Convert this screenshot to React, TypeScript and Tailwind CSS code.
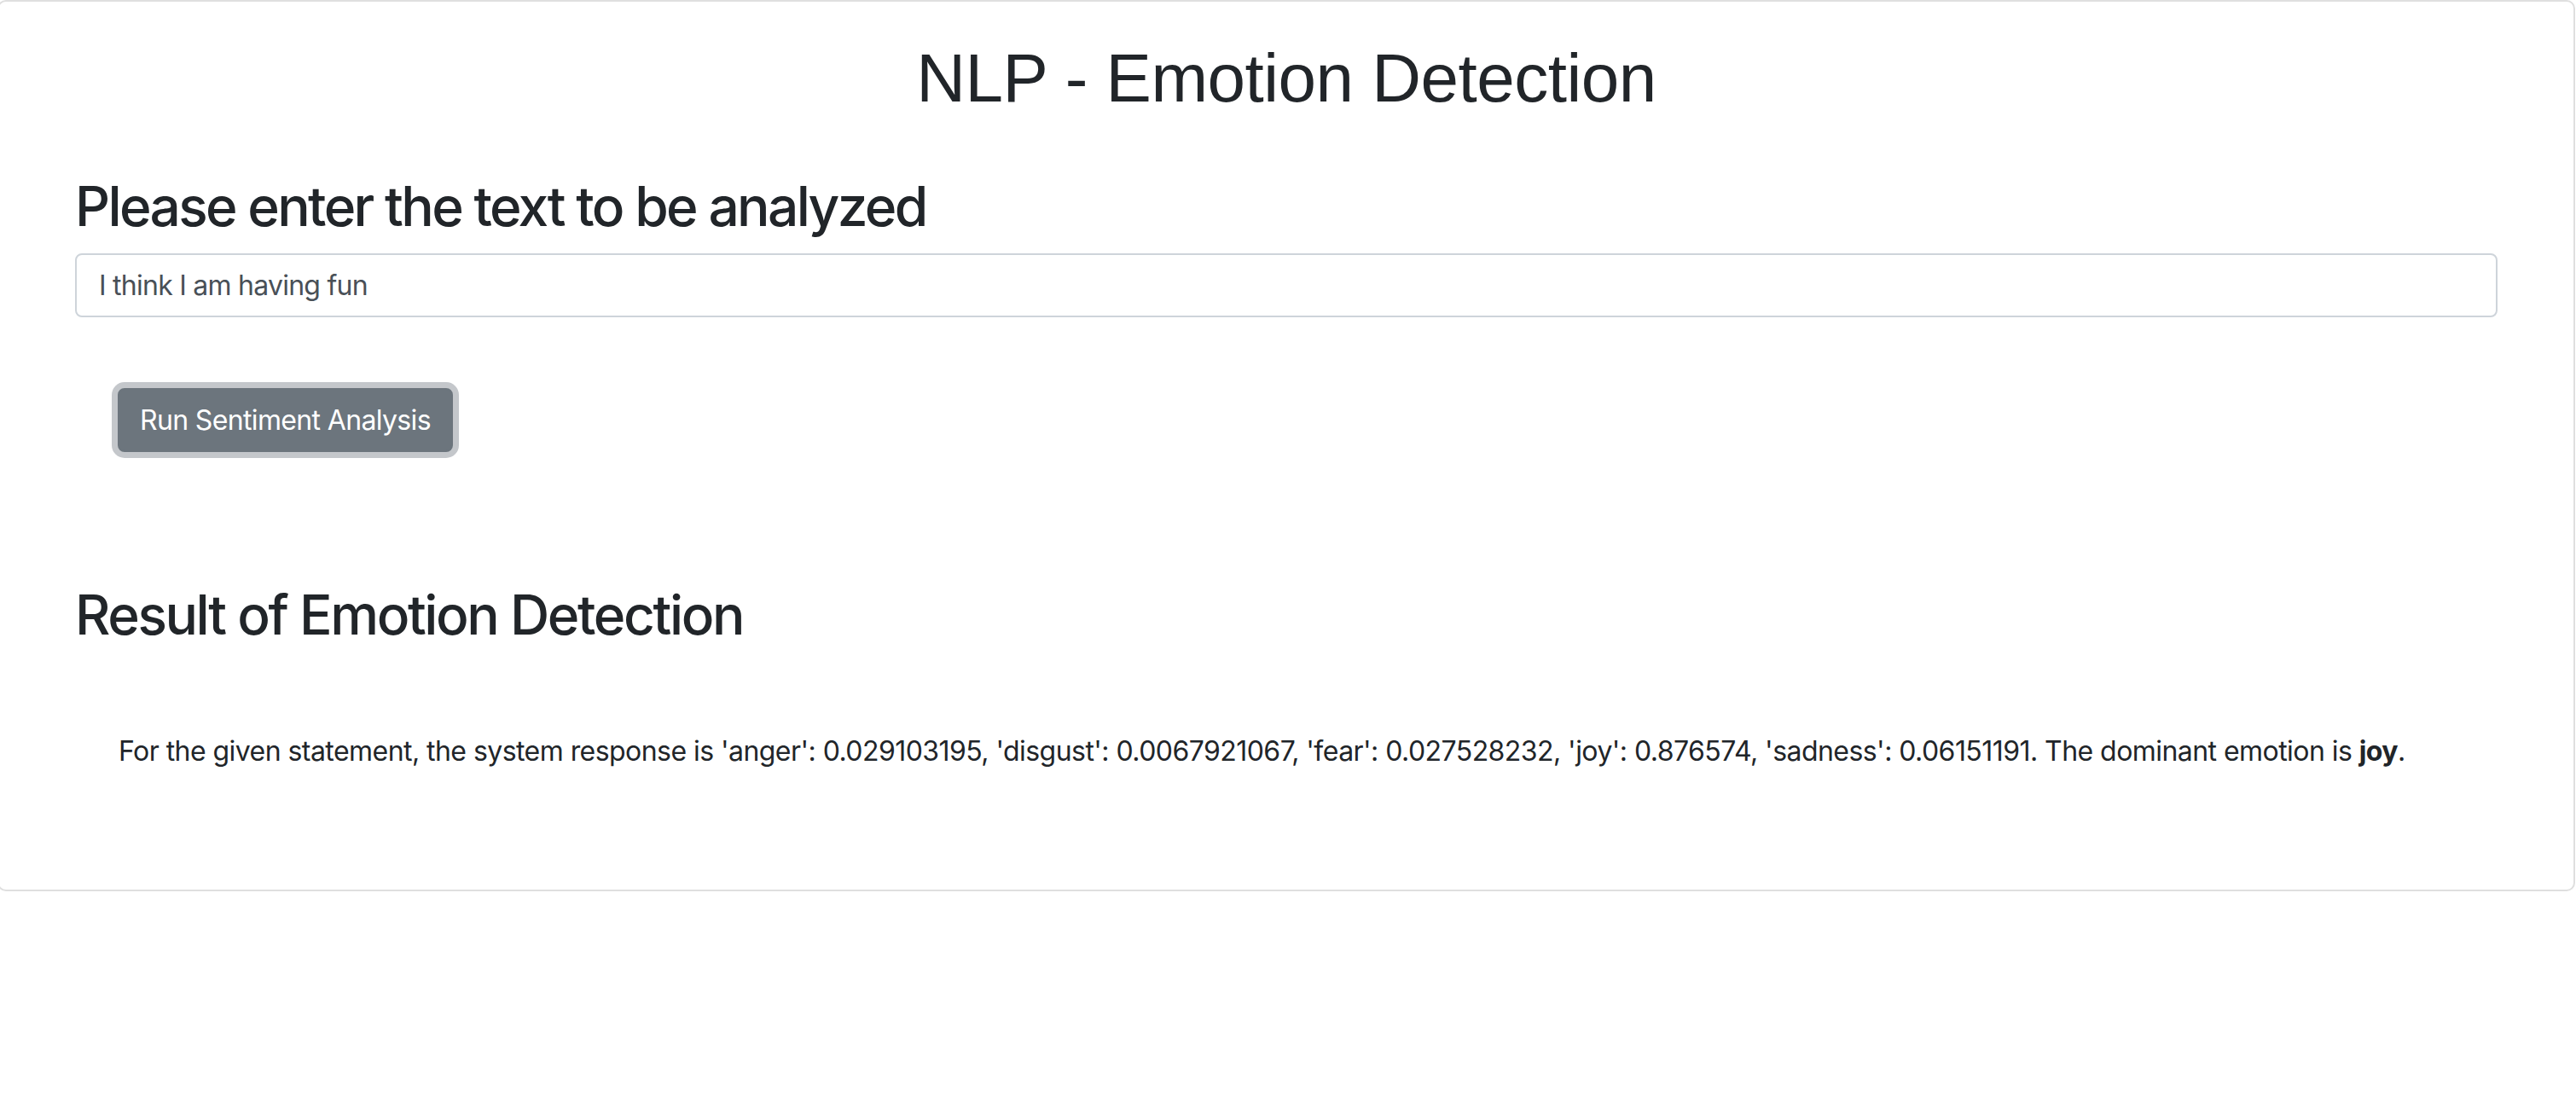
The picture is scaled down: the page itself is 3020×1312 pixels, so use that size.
import React from "react";

export default function App() {
  return (
    <div className="min-h-[1312px] bg-white overflow-hidden font-['Inter','Noto_Sans',sans-serif] text-[#212529]">
      <div className="-ml-[3px] w-[3022px] h-[1045px] border-2 border-[#dfdfdf] rounded-[10px] bg-white pt-[42px] px-[89px] flex flex-col">
        <h1 className="text-center text-[80px] leading-[96px] font-normal tracking-[-0.5px] font-['Liberation_Sans',Arial,sans-serif] mb-[63px]">
          NLP - Emotion Detection
        </h1>
        <h2 className="text-[64px] leading-[77px] font-medium tracking-[-2.65px] mb-[17px]">
          Please enter the text to be analyzed
        </h2>
        <div className="h-[75px] border-2 border-[#ced4da] rounded-[8px] flex items-center pl-[26px] text-[32px] tracking-[-0.75px] text-[#495057]">
          I think I am having fun
        </div>
        <div className="pt-[83px] pl-[50px] flex">
          <button className="h-[75px] px-[24px] rounded-[8px] bg-[#6c757d] border-2 border-[#6c757d] text-white text-[32px] leading-[48px] tracking-[-0.65px] shadow-[0_0_0_7px_#c4c7cb]">
            Run Sentiment Analysis
          </button>
        </div>
        <h2 className="mt-[152px] text-[64px] leading-[77px] font-medium tracking-[-2.4px]">
          Result of Emotion Detection
        </h2>
        <p className="mt-[98px] pl-[51px] text-[32px] leading-[48px] tracking-[-0.55px]">
          For the given statement, the system response is 'anger': 0.029103195, 'disgust': 0.0067921067, 'fear': 0.027528232, 'joy': 0.876574, 'sadness': 0.06151191. The dominant emotion is <b className="font-bold">joy</b>.
        </p>
      </div>
    </div>
  );
}
